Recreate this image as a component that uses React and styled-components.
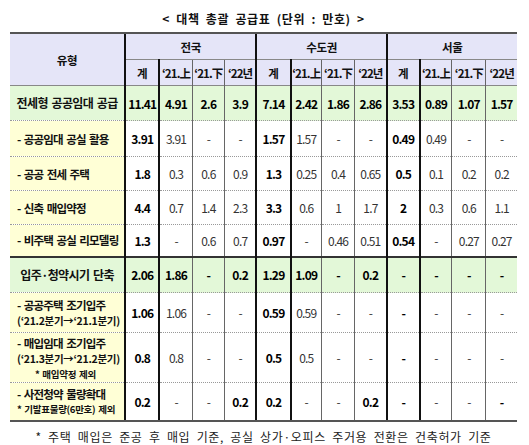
import React from 'react'
import styled, { createGlobalStyle } from 'styled-components'

const GlobalStyle = createGlobalStyle`
    body {
        margin: 0;
        background: #fff;
        font-family: "Noto Sans CJK KR", "Noto Sans", sans-serif;
        color: #111;
    }
`;

const Page = styled.div`
    width: 529px;
    height: 445px;
    padding: 11px 0 0 10px;
    box-sizing: border-box;
    overflow: hidden;
`;

const Title = styled.div`
    width: 507px;
    text-align: center;
    font-size: 12px;
    font-weight: 700;
    letter-spacing: 0.6px;
    word-spacing: 3px;
    line-height: 16px;
    margin-bottom: 5px;
`;

const Table = styled.table`
    width: 507px;
    table-layout: fixed;
    border-collapse: collapse;
`;

const lineStyles = {
    thick: '2px solid #111',
    thin: '1px solid #666',
    none: 'none',
};

const topStyles = {
    head: '2px solid #555',
    solid: '1px solid #888',
    dotted: '1px dotted #999',
    thick: '2px solid #333',
};

const bgColors = {
    head: '#e5e5f8',
    main: '#e3f8d8',
    sub: '#ffffd6',
    data: '#ffffff',
};

const Th = styled.th`
    height: ${p => p.$h}px;
    padding: 0;
    background: ${bgColors.head};
    font-size: 11.5px;
    font-weight: 700;
    letter-spacing: ${p => (p.$tight ? -0.9 : -0.3)}px;
    line-height: 14px;
    white-space: nowrap;
    overflow: hidden;
    text-align: center;
    vertical-align: middle;
    border-left: ${p => lineStyles[p.$left || 'none']};
    border-top: ${p => topStyles[p.$top || 'solid']};
`;

const Row = styled.tr`
    height: ${p => p.$h}px;
`;

const Label = styled.td`
    padding: 0 0 0 ${p => (p.$center ? 0 : 7)}px;
    background: ${p => bgColors[p.$kind]};
    font-weight: 700;
    text-align: ${p => (p.$center ? 'center' : 'left')};
    white-space: nowrap;
    overflow: hidden;
    border-top: ${p => topStyles[p.$top]};
    border-bottom: ${p => (p.$last ? '2px solid #555' : 'none')};
`;

const SubLine = styled.div`
    font-size: ${p => (p.$main ? 12 : p.$paren ? 10.5 : 11.5)}px;
    line-height: 16px;
    letter-spacing: ${p => (p.$main ? -0.6 : p.$paren ? -0.3 : -0.8)}px;
    word-spacing: ${p => (p.$paren ? 0 : 1.5)}px;
`;

const Note = styled.div`
    font-size: 9.5px;
    line-height: 14px;
    letter-spacing: -0.3px;
    word-spacing: 1px;
    padding-left: ${p => p.$indent}px;
`;

const Value = styled.td`
    padding: 0;
    background: ${p => bgColors[p.$kind]};
    font-size: 12px;
    font-weight: ${p => (p.$bold ? 700 : 400)};
    color: ${p => (p.$bold ? '#000' : '#333')};
    letter-spacing: -0.8px;
    text-align: center;
    white-space: nowrap;
    border-left: ${p => lineStyles[p.$left]};
    border-top: ${p => topStyles[p.$top]};
    border-bottom: ${p => (p.$last ? '2px solid #555' : 'none')};
`;

const Footer = styled.div`
    width: 507px;
    margin-top: 7px;
    text-align: center;
    font-size: 12px;
    line-height: 16px;
    letter-spacing: 0.65px;
    word-spacing: 3px;
    color: #222;
`;

const widths = [115, 34, 33, 32, 32, 34, 31, 33, 32, 33, 32, 34, 31];
const regions = ['전국', '수도권', '서울'];
const periods = ['계', '‘21.上', '‘21.下', '‘22년'];
const dash = ['-', '-', '-', '-'];

const rows = [
    { kind: 'main', h: 35, top: 'solid', label: ['전세형 공공임대 공급'],
        vals: [['11.41', '4.91', '2.6', '3.9'], ['7.14', '2.42', '1.86', '2.86'], ['3.53', '0.89', '1.07', '1.57']] },
    { kind: 'sub', h: 36, top: 'dotted', label: ['- 공공임대 공실 활용'],
        vals: [['3.91', '3.91', '-', '-'], ['1.57', '1.57', '-', '-'], ['0.49', '0.49', '-', '-']] },
    { kind: 'sub', h: 34, top: 'dotted', label: ['- 공공 전세 주택'],
        vals: [['1.8', '0.3', '0.6', '0.9'], ['1.3', '0.25', '0.4', '0.65'], ['0.5', '0.1', '0.2', '0.2']] },
    { kind: 'sub', h: 34, top: 'dotted', label: ['- 신축 매입약정'],
        vals: [['4.4', '0.7', '1.4', '2.3'], ['3.3', '0.6', '1', '1.7'], ['2', '0.3', '0.6', '1.1']] },
    { kind: 'sub', h: 32, top: 'dotted', label: ['- 비주택 공실 리모델링'],
        vals: [['1.3', '-', '0.6', '0.7'], ['0.97', '-', '0.46', '0.51'], ['0.54', '-', '0.27', '0.27']] },
    { kind: 'main', h: 36, top: 'thick', label: ['입주·청약시기 단축'],
        vals: [['2.06', '1.86', '-', '0.2'], ['1.29', '1.09', '-', '0.2'], dash] },
    { kind: 'sub', h: 40, top: 'dotted', label: ['- 공공주택 조기입주', '(‘21.2분기→‘21.1분기)'],
        vals: [['1.06', '1.06', '-', '-'], ['0.59', '0.59', '-', '-'], dash] },
    { kind: 'sub', h: 50, top: 'dotted', label: ['- 매입임대 조기입주', '(‘21.3분기→‘21.2분기)'],
        note: '* 매입약정 제외', indent: 18,
        vals: [['0.8', '0.8', '-', '-'], ['0.5', '0.5', '-', '-'], dash] },
    { kind: 'sub', h: 38, top: 'dotted', label: ['- 사전청약 물량확대'],
        note: '* 기발표물량(6만호) 제외', indent: 0, bold: [0, 3],
        vals: [['0.2', '-', '-', '0.2'], ['0.2', '-', '-', '0.2'], dash] },
];

const isBold = (row, j) => {
    if (row.kind === 'main') return true;
    if (row.bold) return row.bold.includes(j);
    return j === 0;
};

const App = () => {
    return (
        <Page>
            <GlobalStyle />
            <Title>&lt; 대책 총괄 공급표 (단위 : 만호) &gt;</Title>
            <Table>
                <colgroup>
                    {widths.map((w, i) => <col key={i} style={{ width: w }} />)}
                </colgroup>
                <thead>
                    <tr>
                        <Th rowSpan={2} $h={25} $top="head">유형</Th>
                        {regions.map(r => (
                            <Th key={r} colSpan={4} $h={25} $top="head" $left="thick">{r}</Th>
                        ))}
                    </tr>
                    <tr>
                        {regions.map(r => periods.map((p, j) => (
                            <Th key={r + p} $h={25} $tight={j > 0} $left={j < 2 ? 'thick' : 'thin'}>{p}</Th>
                        )))}
                    </tr>
                </thead>
                <tbody>
                    {rows.map((row, i) => {
                        const last = i === rows.length - 1;
                        const main = row.kind === 'main';
                        return (
                            <Row key={i} $h={row.h}>
                                <Label $kind={row.kind} $top={row.top} $center={main} $last={last}>
                                    {row.label.map((t, k) => (
                                        <SubLine key={t} $main={main} $paren={k > 0}>{t}</SubLine>
                                    ))}
                                    {row.note && <Note $indent={row.indent}>{row.note}</Note>}
                                </Label>
                                {row.vals.map((group, g) => group.map((v, j) => (
                                    <Value
                                        key={g + '-' + j}
                                        $kind={main ? 'main' : 'data'}
                                        $top={row.top}
                                        $left={j < 2 ? 'thick' : 'thin'}
                                        $bold={isBold(row, j)}
                                        $last={last}
                                    >
                                        {v}
                                    </Value>
                                )))}
                            </Row>
                        );
                    })}
                </tbody>
            </Table>
            <Footer>* 주택 매입은 준공 후 매입 기준, 공실 상가·오피스 주거용 전환은 건축허가 기준</Footer>
        </Page>
    )
}

export default App;
